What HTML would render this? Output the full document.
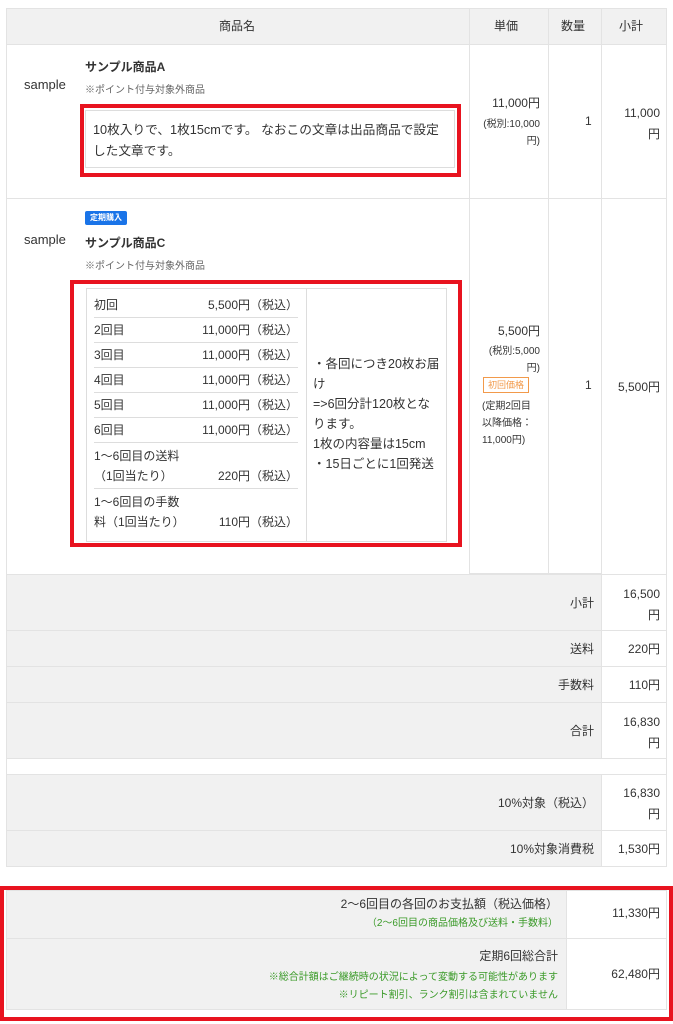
<!DOCTYPE html>
<html><head><meta charset="utf-8"><style>
*{margin:0;padding:0;box-sizing:border-box}
body{width:673px;height:1024px;background:#fff;font-family:"Liberation Sans","Noto Sans CJK JP",sans-serif;font-size:12px;color:#333;position:relative;overflow:hidden}
.a{position:absolute;white-space:nowrap}
.g{background:#f1f1f1}
.bd{border:1px solid #e3e3e3}
.r{text-align:right}
.s{font-size:10px}
.red{border:4px solid #e8131f}
.grn{color:#3a9a28}
.ln{border-bottom:1px solid #ddd}
</style></head><body>
<div class="a g bd" style="left:6px;top:8px;width:661px;height:37px"></div>
<div class="a bd" style="left:469px;top:8px;width:80px;height:566px"></div>
<div class="a bd" style="left:548px;top:8px;width:54px;height:566px"></div>
<div class="a bd" style="left:6px;top:44px;width:661px;height:155px"></div>
<div class="a bd" style="left:6px;top:198px;width:661px;height:377px"></div>
<div class="a" style="left:219px;top:17px">商品名</div>
<div class="a" style="left:494px;top:17px">単価</div>
<div class="a" style="left:561px;top:17px">数量</div>
<div class="a" style="left:619px;top:17px">小計</div>
<!-- row A -->
<div class="a" style="left:24px;top:77px;font-size:13px">sample</div>
<div class="a" style="left:85px;top:58px;font-weight:bold">サンプル商品A</div>
<div class="a s" style="left:85px;top:81px;color:#666">※ポイント付与対象外商品</div>
<div class="a red" style="left:80px;top:104px;width:381px;height:73px"></div>
<div class="a" style="left:85px;top:110px;width:370px;height:58px;border:1px solid #ddd"></div>
<div class="a" style="left:93px;top:120px;line-height:21px;font-size:12.7px">10枚入りで、1枚15cmです。 なおこの文章は出品商品で設定<br>した文章です。</div>
<div class="a r" style="left:472px;top:94px;width:68px">11,000円</div>
<div class="a r s" style="left:472px;top:116px;width:68px;line-height:17px">(税別:10,000<br>円)</div>
<div class="a" style="left:585px;top:114px">1</div>
<div class="a r" style="left:605px;top:103px;width:55px;line-height:21px">11,000<br>円</div>
<!-- row C -->
<div class="a" style="left:85px;top:211px;background:#1a74e8;color:#fff;font-size:8px;font-weight:bold;padding:1px 5px;border-radius:2px;height:14px;line-height:12px">定期購入</div>
<div class="a" style="left:24px;top:232px;font-size:13px">sample</div>
<div class="a" style="left:85px;top:234px;font-weight:bold">サンプル商品C</div>
<div class="a s" style="left:85px;top:257px;color:#666">※ポイント付与対象外商品</div>
<div class="a red" style="left:70px;top:280px;width:392px;height:267px"></div>
<div class="a" style="left:86px;top:288px;width:361px;height:254px;border:1px solid #ddd"></div>
<div class="a" style="left:306px;top:288px;width:1px;height:254px;background:#ddd"></div>
<div class="a" style="left:94px;top:293px;width:204px;line-height:17px">
<div class="ln" style="display:flex;justify-content:space-between;padding:4px 0 3px"><span>初回</span><span>5,500円（税込）</span></div>
<div class="ln" style="display:flex;justify-content:space-between;padding:4px 0 3px"><span>2回目</span><span>11,000円（税込）</span></div>
<div class="ln" style="display:flex;justify-content:space-between;padding:4px 0 3px"><span>3回目</span><span>11,000円（税込）</span></div>
<div class="ln" style="display:flex;justify-content:space-between;padding:4px 0 3px"><span>4回目</span><span>11,000円（税込）</span></div>
<div class="ln" style="display:flex;justify-content:space-between;padding:4px 0 3px"><span>5回目</span><span>11,000円（税込）</span></div>
<div class="ln" style="display:flex;justify-content:space-between;padding:4px 0 3px"><span>6回目</span><span>11,000円（税込）</span></div>
<div class="ln" style="padding:3px 0 2px;line-height:20px">1～6回目の送料<br><span style="display:flex;justify-content:space-between"><span>（1回当たり）</span><span>220円（税込）</span></span></div>
<div style="padding:3px 0 2px;line-height:20px">1～6回目の手数<br><span style="display:flex;justify-content:space-between"><span>料（1回当たり）</span><span>110円（税込）</span></span></div>
</div>
<div class="a" style="left:313px;top:354px;line-height:20px;font-size:12.5px">・各回につき20枚お届<br>け<br>=&gt;6回分計120枚とな<br>ります。<br>1枚の内容量は15cm<br>・15日ごとに1回発送</div>
<div class="a r" style="left:472px;top:322px;width:68px">5,500円</div>
<div class="a r s" style="left:472px;top:343px;width:68px;line-height:17px">(税別:5,000<br>円)</div>
<div class="a" style="left:483px;top:377px;border:1px solid #f29a4b;color:#f29a4b;font-size:9px;padding:1px 4px;line-height:12px">初回価格</div>
<div class="a s" style="left:482px;top:398px;line-height:17px">(定期2回目<br>以降価格：<br>11,000円)</div>
<div class="a" style="left:585px;top:378px">1</div>
<div class="a r" style="left:605px;top:378px;width:55px">5,500円</div>
<!-- summary -->
<div class="a g bd" style="left:6px;top:574px;width:596px;height:57px"></div>
<div class="a bd" style="left:601px;top:574px;width:66px;height:57px"></div>
<div class="a g bd" style="left:6px;top:630px;width:596px;height:37px"></div>
<div class="a bd" style="left:601px;top:630px;width:66px;height:37px"></div>
<div class="a g bd" style="left:6px;top:666px;width:596px;height:37px"></div>
<div class="a bd" style="left:601px;top:666px;width:66px;height:37px"></div>
<div class="a g bd" style="left:6px;top:702px;width:596px;height:57px"></div>
<div class="a bd" style="left:601px;top:702px;width:66px;height:57px"></div>
<div class="a bd" style="left:6px;top:758px;width:661px;height:17px"></div>
<div class="a g bd" style="left:6px;top:774px;width:596px;height:57px"></div>
<div class="a bd" style="left:601px;top:774px;width:66px;height:57px"></div>
<div class="a g bd" style="left:6px;top:830px;width:596px;height:37px"></div>
<div class="a bd" style="left:601px;top:830px;width:66px;height:37px"></div>
<div class="a r" style="left:400px;top:594px;width:194px">小計</div>
<div class="a r" style="left:605px;top:584px;width:55px;line-height:21px">16,500<br>円</div>
<div class="a r" style="left:400px;top:640px;width:194px">送料</div>
<div class="a r" style="left:605px;top:640px;width:55px">220円</div>
<div class="a r" style="left:400px;top:676px;width:194px">手数料</div>
<div class="a r" style="left:605px;top:676px;width:55px">110円</div>
<div class="a r" style="left:400px;top:722px;width:194px">合計</div>
<div class="a r" style="left:605px;top:712px;width:55px;line-height:21px">16,830<br>円</div>
<div class="a r" style="left:400px;top:794px;width:194px">10%対象（税込）</div>
<div class="a r" style="left:605px;top:783px;width:55px;line-height:21px">16,830<br>円</div>
<div class="a r" style="left:400px;top:840px;width:194px">10%対象消費税</div>
<div class="a r" style="left:605px;top:840px;width:55px">1,530円</div>
<!-- bottom -->
<div class="a red" style="left:0;top:886px;width:673px;height:135px"></div>
<div class="a g bd" style="left:6px;top:890px;width:561px;height:49px"></div>
<div class="a bd" style="left:566px;top:890px;width:101px;height:49px"></div>
<div class="a g bd" style="left:6px;top:938px;width:561px;height:72px"></div>
<div class="a bd" style="left:566px;top:938px;width:101px;height:72px"></div>
<div class="a r" style="left:200px;top:895px;width:358px">2～6回目の各回のお支払額（税込価格）</div>
<div class="a r s grn" style="left:200px;top:914px;width:358px">（2～6回目の商品価格及び送料・手数料）</div>
<div class="a r" style="left:570px;top:904px;width:90px">11,330円</div>
<div class="a r" style="left:200px;top:947px;width:358px">定期6回総合計</div>
<div class="a r s grn" style="left:200px;top:968px;width:358px">※総合計額はご継続時の状況によって変動する可能性があります</div>
<div class="a r s grn" style="left:200px;top:986px;width:358px">※リピート割引、ランク割引は含まれていません</div>
<div class="a r" style="left:570px;top:965px;width:90px">62,480円</div>
</body></html>
